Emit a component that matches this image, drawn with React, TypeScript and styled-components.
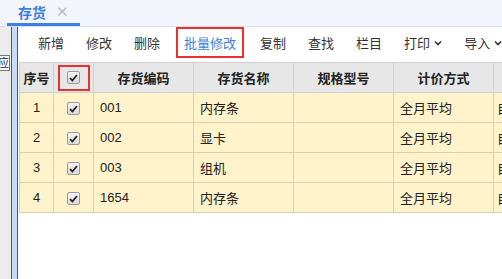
import React from "react";
import styled, { createGlobalStyle } from "styled-components";

const GlobalStyle = createGlobalStyle`
    html, body {
        margin: 0;
        padding: 0;
        background: #ffffff;
    }
    body {
        font-family: "Liberation Sans", "Noto Sans CJK SC", sans-serif;
        font-size: 13px;
        color: #333333;
    }
`

const Page = styled.div`
    width: 502px;
    height: 279px;
    display: flex;
    flex-direction: column;
    overflow: hidden;
`
const TabBar = styled.div`
    height: 27px;
    flex: none;
    display: flex;
    align-items: flex-end;
    background: #f2f5fc;
    border-bottom: 1px solid #dcdfe6;
    box-sizing: border-box;
    padding-left: 7px;
`
const Tab = styled.div`
    width: 73px;
    height: 26px;
    box-sizing: border-box;
    display: flex;
    align-items: center;
    padding-left: 11px;
    gap: 10px;
    border-bottom: 3px solid #3d7ee0;
    color: #3d7ee0;
    font-size: 14px;
    font-weight: bold;
`
const Close = styled.span`
    color: #b8bcc4;
    font-size: 15px;
    font-weight: normal;
    line-height: 1;
`
const Body = styled.div`
    flex: 1;
    display: flex;
    min-height: 0;
`
const SideStrip = styled.div`
    width: 11px;
    flex: none;
    background: #ececec;
    padding-top: 28px;
    overflow: hidden;
`
const SideBox = styled.div`
    width: 18px;
    height: 14px;
    margin-left: -10px;
    border: 1px solid #777777;
    background: #f6f6f6;
    font-size: 11px;
    line-height: 14px;
    text-align: right;
    color: #333333;
`
const Splitter = styled.div`
    width: 7px;
    flex: none;
    box-sizing: border-box;
    background: #c9dbf6;
    border-left: 1px solid #3a5aa0;
    border-right: 1px solid #3a5aa0;
`
const Content = styled.div`
    flex: 1;
    min-width: 0;
    overflow: hidden;
    background: #ffffff;
`
const Toolbar = styled.div`
    height: 31px;
    display: flex;
    align-items: center;
    padding-left: 9px;
    white-space: nowrap;
`
const ToolButton = styled.div<{ $active?: boolean; $marked?: boolean }>`
    height: 31px;
    box-sizing: border-box;
    display: flex;
    align-items: center;
    gap: 4px;
    padding: 0 ${(p) => (p.$marked ? "6px" : "11px")};
    margin: 0 ${(p) => (p.$marked ? "5px" : "0")};
    border: ${(p) => (p.$marked ? "2px solid #e8302f" : "none")};
    color: ${(p) => (p.$active ? "#3d7ee0" : "#333333")};
    font-size: 13px;
    flex: none;
`
const Chevron = () => (
    <svg width="8" height="6" viewBox="0 0 8 6">
        <polyline points="1,1.5 4,4.5 7,1.5" fill="none" stroke="#333" strokeWidth="1.6" />
    </svg>
)
const Grid = styled.table`
    margin: 4px 0 0 1px;
    border-collapse: collapse;
    table-layout: fixed;
    width: 574px;
`
const HeadCell = styled.th`
    height: 29px;
    padding: 0;
    background: #e7e7e7;
    border: 1px solid #d0d0d0;
    font-size: 13px;
    font-weight: bold;
    color: #222222;
    text-align: center;
`
const Cell = styled.td<{ $center?: boolean }>`
    height: 29px;
    padding: 0 6px;
    background: #fff3cb;
    border: 1px solid #d8cfb4;
    font-size: 13px;
    color: #222222;
    text-align: ${(p) => (p.$center ? "center" : "left")};
    white-space: nowrap;
    overflow: hidden;
`
const CheckMark = styled.span`
    display: inline-flex;
    align-items: center;
    justify-content: center;
    width: 13px;
    height: 13px;
    box-sizing: border-box;
    border: 1px solid #9a9a9a;
    border-radius: 2px;
    background: linear-gradient(#f4f4f4, #d9d9d9);
    vertical-align: middle;
`
const Marked = styled.span`
    display: inline-flex;
    align-items: center;
    justify-content: center;
    width: 28px;
    height: 22px;
    border: 2px solid #e8302f;
`

const Check = () => (
    <CheckMark>
        <svg width="9" height="8" viewBox="0 0 9 8">
            <polyline points="1,4.2 3.4,6.5 8,1" fill="none" stroke="#222" strokeWidth="1.8" />
        </svg>
    </CheckMark>
)

const tools = ["新增", "修改", "删除", "批量修改", "复制", "查找", "栏目"]
const rows = [
    { no: 1, code: "001", name: "内存条" },
    { no: 2, code: "002", name: "显卡" },
    { no: 3, code: "003", name: "组机" },
    { no: 4, code: "1654", name: "内存条" },
]

function App() {
    return (
        <Page>
            <GlobalStyle />
            <TabBar>
                <Tab>
                    存货
                    <Close>✕</Close>
                </Tab>
            </TabBar>
            <Body>
                <SideStrip>
                    <SideBox>应</SideBox>
                </SideStrip>
                <Splitter />
                <Content>
                    <Toolbar>
                        {tools.map((t) => (
                            <ToolButton key={t} $active={t === "批量修改"} $marked={t === "批量修改"}>
                                {t}
                            </ToolButton>
                        ))}
                        <ToolButton>打印<Chevron /></ToolButton>
                        <ToolButton>导入<Chevron /></ToolButton>
                    </Toolbar>
                    <Grid>
                        <colgroup>
                            <col style={{ width: 34 }} />
                            <col style={{ width: 40 }} />
                            <col style={{ width: 100 }} />
                            <col style={{ width: 100 }} />
                            <col style={{ width: 100 }} />
                            <col style={{ width: 100 }} />
                            <col style={{ width: 100 }} />
                        </colgroup>
                        <thead>
                            <tr>
                                <HeadCell>序号</HeadCell>
                                <HeadCell>
                                    <Marked><Check /></Marked>
                                </HeadCell>
                                <HeadCell>存货编码</HeadCell>
                                <HeadCell>存货名称</HeadCell>
                                <HeadCell>规格型号</HeadCell>
                                <HeadCell>计价方式</HeadCell>
                                <HeadCell></HeadCell>
                            </tr>
                        </thead>
                        <tbody>
                            {rows.map((r) => (
                                <tr key={r.no}>
                                    <Cell $center>{r.no}</Cell>
                                    <Cell $center><Check /></Cell>
                                    <Cell>{r.code}</Cell>
                                    <Cell>{r.name}</Cell>
                                    <Cell></Cell>
                                    <Cell>全月平均</Cell>
                                    <Cell style={{ paddingLeft: 3 }}>自动</Cell>
                                </tr>
                            ))}
                        </tbody>
                    </Grid>
                </Content>
            </Body>
        </Page>
    )
}

export default App;
